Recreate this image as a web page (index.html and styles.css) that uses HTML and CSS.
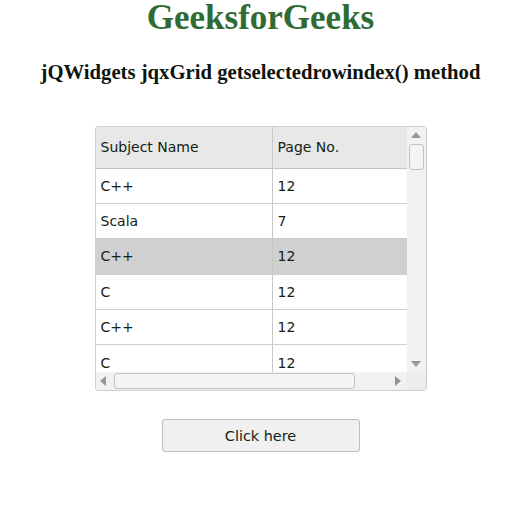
FILE: index.html
```html
<!DOCTYPE html>
<html>
<head>
<meta charset="utf-8">
<link rel="stylesheet" href="styles.css">
</head>
<body>
<div class="page">
  <h1 class="title">GeeksforGeeks</h1>
  <h3 class="subtitle">jQWidgets jqxGrid getselectedrowindex() method</h3>
  <div class="grid">
    <div class="grid-main">
      <div class="grid-body">
        <div class="row header">
          <div class="cell c1">Subject Name</div>
          <div class="cell c2">Page No.</div>
        </div>
        <div class="row">
          <div class="cell c1">C++</div>
          <div class="cell c2">12</div>
        </div>
        <div class="row">
          <div class="cell c1">Scala</div>
          <div class="cell c2">7</div>
        </div>
        <div class="row selected">
          <div class="cell c1">C++</div>
          <div class="cell c2">12</div>
        </div>
        <div class="row">
          <div class="cell c1">C</div>
          <div class="cell c2">12</div>
        </div>
        <div class="row">
          <div class="cell c1">C++</div>
          <div class="cell c2">12</div>
        </div>
        <div class="row">
          <div class="cell c1">C</div>
          <div class="cell c2">12</div>
        </div>
      </div>
      <div class="vscroll">
        <svg class="arrow" width="10" height="6" viewBox="0 0 10 6"><polygon points="5,0 10,6 0,6" fill="#8e9a8e"/></svg>
        <div class="vthumb"></div>
        <div class="vspace"></div>
        <svg class="arrow" width="10" height="6" viewBox="0 0 10 6"><polygon points="0,0 10,0 5,6" fill="#8e9a8e"/></svg>
      </div>
    </div>
    <div class="hscroll">
      <svg class="harrow" width="6" height="10" viewBox="0 0 6 10"><polygon points="6,0 6,10 0,5" fill="#8e9a8e"/></svg>
      <div class="hthumb"></div>
      <div class="hspace"></div>
      <svg class="harrow" width="6" height="10" viewBox="0 0 6 10"><polygon points="0,0 0,10 6,5" fill="#8e9a8e"/></svg>
      <div class="corner"></div>
    </div>
  </div>
  <button class="btn">Click here</button>
</div>
</body>
</html>
```

FILE: styles.css
```css
html, body {
  margin: 0;
  padding: 0;
  background: #ffffff;
}
.page {
  width: 521px;
  display: flex;
  flex-direction: column;
  align-items: center;
}
.title {
  margin: 0;
  font-family: "Liberation Serif", serif;
  font-size: 35px;
  line-height: 36px;
  font-weight: bold;
  color: #306b34;
}
.subtitle {
  margin: 24px 0 0 0;
  font-family: "Liberation Serif", serif;
  font-size: 20.7px;
  line-height: 24px;
  font-weight: bold;
  color: #0e140e;
}
.grid {
  margin-top: 42px;
  width: 330px;
  border: 1px solid #cfcfcf;
  border-radius: 3px;
  overflow: hidden;
  display: flex;
  flex-direction: column;
  font-family: "DejaVu Sans", Verdana, sans-serif;
  font-size: 14px;
  color: #142214;
}
.grid-main {
  display: flex;
  height: 245px;
}
.grid-body {
  width: 311px;
  overflow: hidden;
}
.row {
  display: flex;
  height: 35.4px;
  border-bottom: 1px solid #cdcdcd;
  box-sizing: border-box;
}
.row.header {
  height: 41.5px;
  background: #e8e8e8;
  border-bottom: 1px solid #c4c4c4;
}
.row.selected {
  background: #d0d0d0;
}
.cell {
  display: flex;
  align-items: center;
  padding-left: 5px;
  box-sizing: border-box;
}
.c1 {
  width: 177px;
  border-right: 1px solid #c8c8c8;
}
.c2 {
  width: 134px;
}
.vscroll {
  width: 19px;
  background: #f1f1f1;
  display: flex;
  flex-direction: column;
  align-items: center;
  padding-top: 5px;
  padding-bottom: 5px;
  box-sizing: border-box;
}
.arrow {
  flex: none;
}
.vthumb {
  margin-top: 6px;
  width: 15px;
  height: 26px;
  box-sizing: border-box;
  border: 1px solid #c3c3c3;
  border-radius: 3px;
  background: #f4f4f4;
}
.vspace {
  flex: 1;
}
.hscroll {
  height: 18px;
  background: #f1f1f1;
  display: flex;
  align-items: center;
  padding-left: 4px;
}
.harrow {
  flex: none;
}
.hthumb {
  margin-left: 8px;
  width: 241px;
  height: 16px;
  box-sizing: border-box;
  border: 1px solid #c3c3c3;
  border-radius: 3px;
  background: #f4f4f4;
}
.hspace {
  flex: 1;
}
.corner {
  width: 19px;
  height: 18px;
  margin-left: 6px;
  background: #ececec;
}
.btn {
  margin-top: 28px;
  width: 198px;
  height: 33px;
  background: #f0f0f0;
  border: 1px solid #bdbdbd;
  border-radius: 3px;
  font-family: "DejaVu Sans", Verdana, sans-serif;
  font-size: 14.4px;
  color: #142214;
  padding: 0;
}
```
